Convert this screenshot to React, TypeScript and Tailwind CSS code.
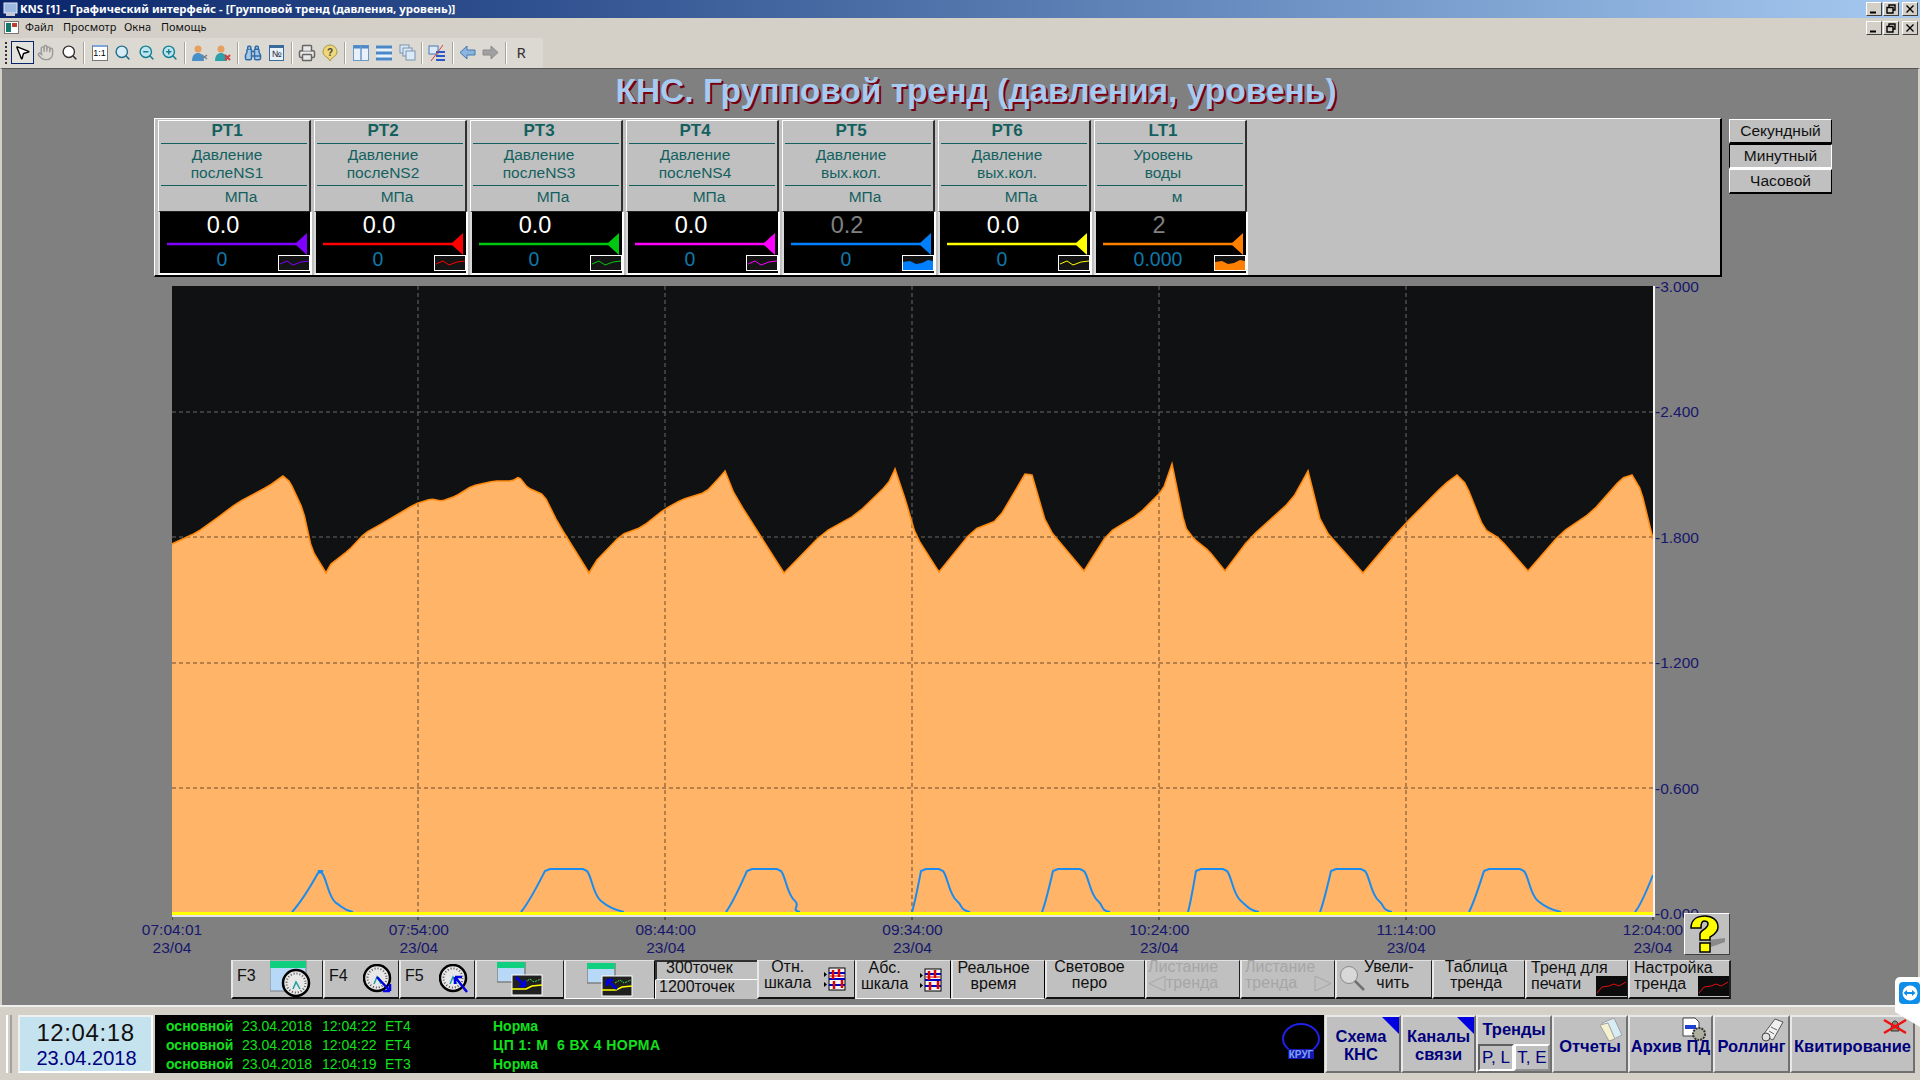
import { ReactNode } from 'react'
import { Binoculars, Hand, MousePointer2, Printer, Search, ZoomIn, ZoomOut } from 'lucide-react'

const SANS = "font-['Liberation_Sans',Arial,sans-serif]"

// top curve of the level trend, real screen coordinates
const LEVEL: [number, number][] = [
  [172, 544], [196, 533], [217, 518], [237, 503], [269, 486], [283, 476], [290, 482], [303, 510], [312, 550], [326, 573],
  [331, 564], [349, 550], [365, 533], [385, 522], [415, 504], [431, 499], [442, 501], [456, 496], [472, 486], [494, 481],
  [512, 481], [519, 477], [528, 488], [544, 495], [558, 523], [589, 573], [597, 560], [621, 535], [642, 527], [665, 509],
  [681, 500], [706, 492], [720, 477], [725, 471], [735, 496], [784, 573], [823, 533], [857, 514], [888, 484], [895, 469],
  [906, 502], [916, 536], [939, 572], [973, 530], [998, 520], [1025, 474], [1032, 475], [1047, 527], [1084, 571], [1108, 533],
  [1139, 514], [1163, 490], [1172, 464], [1185, 527], [1194, 539], [1209, 551], [1225, 571], [1249, 539], [1292, 500], [1308, 471],
  [1322, 527], [1363, 573], [1402, 527], [1445, 484], [1457, 475], [1466, 484], [1484, 529], [1500, 539], [1528, 571], [1561, 533],
  [1592, 512], [1622, 478], [1632, 475], [1641, 490], [1653, 539],
]

// corner-cutting pass so the trace is not so angular; the sharp valleys and peaks stay
const smooth = LEVEL.flatMap((p, i) => {
  const n = LEVEL[i + 1]
  if (!n) return [p]
  const a: [number, number] = [p[0] * 0.85 + n[0] * 0.15, p[1] * 0.85 + n[1] * 0.15]
  const b: [number, number] = [p[0] * 0.15 + n[0] * 0.85, p[1] * 0.15 + n[1] * 0.85]
  if (i === 0 || p[1] >= 560 || p[1] <= 476) return [p, b]
  return [a, b]
})
const levelLine = smooth.map((p) => p.map((v) => v.toFixed(1)).join(',')).join(' ')
const levelArea = `172,913 ${levelLine} 1653,913`

const hump = (a: number, b: number, c: number, d: number, top = 869) =>
  `M${a} 912 C${a + (b - a) * 0.35} 902 ${a + (b - a) * 0.7} ${top + 16} ${b} ${top + 2} L${b + 5} ${top} L${c - 4} ${top} L${c} ${top + 2} C${c + 5} ${top + 8} ${c + 6} ${top + 26} ${c + 14} ${top + 32} C${c + 20} 906 ${d - 10} 910 ${d} 912`

const PUMP_PATH = [
  hump(292, 318, 322, 353, 871),
  hump(521, 545, 587, 624),
  hump(726, 747, 781, 800),
  hump(912, 921, 943, 970),
  hump(1042, 1053, 1084, 1110),
  hump(1188, 1196, 1227, 1259),
  hump(1320, 1331, 1365, 1392),
  hump(1469, 1484, 1524, 1561),
  'M1635 912 C1641 905 1647 890 1653 875',
].join(' ')

const HLINES = [412, 537, 663, 788]
const VLINES = [418, 665, 912, 1159, 1406]
const TIMES = ['07:04:01', '07:54:00', '08:44:00', '09:34:00', '10:24:00', '11:14:00', '12:04:00']
const SCALE = ['-3.000', '-2.400', '-1.800', '-1.200', '-0.600', '-0.000']

const CHANNELS = [
  { tag: 'PT1', l1: 'Давление', l2: 'послеNS1', unit: 'МПа', val: '0.0', low: '0', color: '#8000ff', dim: false, fill: false },
  { tag: 'PT2', l1: 'Давление', l2: 'послеNS2', unit: 'МПа', val: '0.0', low: '0', color: '#ff0000', dim: false, fill: false },
  { tag: 'PT3', l1: 'Давление', l2: 'послеNS3', unit: 'МПа', val: '0.0', low: '0', color: '#00c810', dim: false, fill: false },
  { tag: 'PT4', l1: 'Давление', l2: 'послеNS4', unit: 'МПа', val: '0.0', low: '0', color: '#ff00ff', dim: false, fill: false },
  { tag: 'PT5', l1: 'Давление', l2: 'вых.кол.', unit: 'МПа', val: '0.2', low: '0', color: '#0080ff', dim: true, fill: true },
  { tag: 'PT6', l1: 'Давление', l2: 'вых.кол.', unit: 'МПа', val: '0.0', low: '0', color: '#ffff00', dim: false, fill: false },
  { tag: 'LT1', l1: 'Уровень', l2: 'воды', unit: 'м', val: '2', low: '0.000', color: '#ff8000', dim: true, fill: true },
]

function Channel({ c }: { c: (typeof CHANNELS)[number] }) {
  return (
    <div className="w-[156px] shrink-0 flex flex-col pl-[3px]">
      <div className="h-[91px] border-t border-t-white border-l border-l-white border-r-2 border-r-[#303030] px-[2px] text-[#14605f]">
        <div className="h-[23px] border-b border-[#14605f] text-center pr-[14px] pt-[1px] text-[17px] font-bold leading-[18px]">{c.tag}</div>
        <div className="h-[42px] border-b border-[#14605f] text-center pr-[14px] pt-[2px] text-[15.5px] leading-[18px]">
          <div>{c.l1}</div>
          <div>{c.l2}</div>
        </div>
        <div className="text-center pl-[14px] pt-[2px] text-[15.5px] leading-[18px]">{c.unit}</div>
      </div>
      <div className="h-[64px] w-[154px] bg-black border-l-2 border-l-[#d8d8d8] border-b-2 border-b-white border-r-2 border-r-white border-t border-t-[#202020] flex flex-col">
        <div className={`h-[27px] pr-[24px] text-center text-[23.5px] leading-[27px] ${c.dim ? 'text-[#808080]' : 'text-white'}`}>{c.val}</div>
        <svg width="150" height="22" viewBox="0 0 150 22" className="-mt-[6px] shrink-0">
          <line x1="7" y1="11" x2="138" y2="11" stroke={c.color} strokeWidth="2.5" />
          <polygon points="135,11 147,0 147,22" fill={c.color} />
        </svg>
        <div className="grid grid-cols-[118px_32px] items-start">
          <div className="text-center pl-[6px] -mt-[6px] text-[19.5px] leading-[20px] text-[#0f78aa]">{c.low}</div>
          <svg width="32" height="16" viewBox="0 0 32 16">
            <rect x="0.5" y="0.5" width="31" height="15" fill="#141414" stroke="#fff" />
            {c.fill ? (
              <polygon points="1,7 8,6 14,9 20,8 26,5 31,6 31,15 1,15" fill={c.color} />
            ) : (
              <polyline points="2,9 9,6 15,10 23,7 31,6" fill="none" stroke={c.color} strokeWidth="1" />
            )}
          </svg>
        </div>
      </div>
    </div>
  )
}

function ToolSep() {
  return <div className="w-[2px] h-[22px] mx-[2.5px] bg-[#a8a49c] border-r border-white" />
}

function Tool({ children, active }: { children: ReactNode; active?: boolean }) {
  return (
    <div className={`w-[23.3px] h-[23px] flex items-center justify-center ${active ? 'border border-[#0a246a] bg-[#e4e2dc]' : ''}`}>
      {children}
    </div>
  )
}

function WinBtn({ kind }: { kind: 'min' | 'max' | 'close' }) {
  return (
    <div className="w-[16px] h-[14px] bg-[#d4d0c8] border border-t-white border-l-white border-b-[#404040] border-r-[#404040] flex items-center justify-center">
      <svg width="10" height="10" viewBox="0 0 10 10" fill="none" stroke="#000" strokeWidth="1.4">
        {kind === 'min' && <line x1="1" y1="8.5" x2="7" y2="8.5" strokeWidth="2" />}
        {kind === 'max' && <path d="M3 3V1h6v5H7M1 3.5h6v5.5H1z" />}
        {kind === 'close' && <path d="M1.5 1.5l7 7M8.5 1.5l-7 7" />}
      </svg>
    </div>
  )
}

function Gauge({ x = 0, y = 0, arrow }: { x?: number; y?: number; arrow?: 'in' | 'out' }) {
  return (
    <g transform={`translate(${x} ${y})`}>
      <circle cx="14" cy="14" r="13" fill="#e8e8e8" stroke="#000" strokeWidth="2.5" />
      <circle cx="14" cy="14" r="9.5" fill="none" stroke="#555" strokeWidth="2" strokeDasharray="1 2" />
      <path d="M11 20l3-7 4 7" fill="none" stroke="#20a0a0" strokeWidth="1.5" />
      {arrow === 'in' && <path d="M14 13l13 14M27 27v-7M27 27h-7" stroke="#0000e0" strokeWidth="2.5" fill="none" />}
      {arrow === 'out' && <path d="M28 28L16 13M16 13v7M16 13h7" stroke="#0000e0" strokeWidth="2.5" fill="none" />}
    </g>
  )
}

function TrendWin({ up }: { up?: boolean }) {
  return (
    <svg width="46" height="34" viewBox="0 0 46 34">
      <rect x="0" y="0" width="28" height="20" fill="#b8d8f8" stroke="#808080" strokeWidth="1.5" />
      <rect x="0" y="0" width="28" height="6" fill="#10d080" />
      <rect x="15" y="13" width="30" height="20" fill="#202020" stroke="#fff" strokeWidth="1" />
      <path d="M15 27h14l6-3 10-1" stroke="#ffff00" strokeWidth="1.5" fill="none" />
      <path d="M28 20l5-3 4 3 7-3" stroke="#40e040" strokeWidth="1" fill="none" strokeDasharray="2 1" />
      {up ? (
        <path d="M30 26L20 17M20 17v6M20 17h6" stroke="#0000e0" strokeWidth="2.5" fill="none" />
      ) : (
        <path d="M19 15l9 9M28 24v-6M28 24h-6" stroke="#0000e0" strokeWidth="2.5" fill="none" />
      )}
    </svg>
  )
}

function ScaleIcon() {
  return (
    <svg width="22" height="24" viewBox="0 0 22 24" className="shrink-0">
      <path d="M0 5l3 2.5L0 10zM0 15l3 2.5L0 20z" fill="#000" />
      <rect x="5" y="1" width="16" height="22" fill="#f4f4f4" stroke="#000" />
      <path d="M5 6h16M5 12h16M5 18h16" stroke="#0000c0" strokeWidth="2" />
      <path d="M9 3v9M15 2v8M18 13v8M10 14v8" stroke="#e00000" strokeWidth="2.5" />
      <path d="M6 9h14" stroke="#e00000" />
    </svg>
  )
}

function MiniTrend() {
  return (
    <svg width="31" height="20" viewBox="0 0 31 20" className="shrink-0">
      <rect width="31" height="20" fill="#0c0c0c" />
      <polyline points="1,17 6,11 13,10 18,8 23,10 30,6" fill="none" stroke="#e01010" strokeWidth="1" />
    </svg>
  )
}

function TBtn({ className, children, pressed }: { className: string; children: ReactNode; pressed?: boolean }) {
  return (
    <div
      className={`${className} h-[39px] shrink-0 bg-[#c0c0c0] border-l-2 border-t border-l-[#e8e8e8] border-t-[#e0e0e0] ${
        pressed ? 'border-r border-b border-r-black border-b-white' : 'border-r border-b-2 border-r-[#202020] border-b-[#101010]'
      } text-[16px] leading-[16px] text-[#111]`}
    >
      {children}
    </div>
  )
}

function NavBtn({ className, children }: { className: string; children: ReactNode }) {
  return (
    <div className={`${className} relative h-[58px] shrink-0 bg-[#c0c0c0] border-2 border-t-[#e8e8e8] border-l-[#e8e8e8] border-b-[#707070] border-r-[#707070] text-[#00007c] font-bold text-[16.5px] leading-[18px]`}>
      {children}
    </div>
  )
}

function CornerMark() {
  return (
    <svg width="17" height="17" viewBox="0 0 17 17" className="absolute top-0 right-0">
      <polygon points="0,0 17,0 17,17" fill="#0000e0" />
    </svg>
  )
}

export default function App() {
  return (
    <div className={`${SANS} relative w-[1920px] h-[1080px] overflow-hidden flex flex-col bg-[#d4d0c8]`}>
      {/* window title */}
      <div className="h-[18px] shrink-0 bg-linear-to-r from-[#0a246a] to-[#a6caf0] flex items-center pl-[3px] pr-[2px]">
        <svg width="15" height="15" viewBox="0 0 15 15" className="shrink-0">
          <rect x="1" y="1" width="13" height="10" fill="#9ab8e0" stroke="#e8e8f0" />
          <rect x="3" y="11" width="9" height="3" fill="#c8c8d8" />
        </svg>
        <span className="ml-[2px] font-['Noto_Sans',sans-serif] text-[11.4px] font-bold text-white whitespace-nowrap">
          KNS [1] - Графический интерфейс - [Групповой тренд (давления, уровень)]
        </span>
        <div className="ml-auto flex gap-[1px]">
          <WinBtn kind="min" />
          <WinBtn kind="max" />
          <div className="ml-[2px]"><WinBtn kind="close" /></div>
        </div>
      </div>

      {/* menu */}
      <div className="h-[19px] shrink-0 flex items-center pl-[4px] pr-[2px] font-['Noto_Sans',sans-serif] text-[11px] text-[#111]">
        <svg width="15" height="15" viewBox="0 0 15 15" className="shrink-0">
          <rect x="0.5" y="1.5" width="14" height="12" fill="#fff" stroke="#777" />
          <rect x="2" y="3" width="5" height="9" fill="#157a6a" />
          <rect x="8" y="3" width="5" height="4" fill="#c04030" />
        </svg>
        <span className="ml-[6px] w-[38px]">Файл</span>
        <span className="w-[61px]">Просмотр</span>
        <span className="w-[37px]">Окна</span>
        <span>Помощь</span>
        <div className="ml-auto flex gap-[1px]">
          <WinBtn kind="min" />
          <WinBtn kind="max" />
          <div className="ml-[2px]"><WinBtn kind="close" /></div>
        </div>
      </div>

      {/* toolbar */}
      <div className="h-[31px] shrink-0 flex items-center">
        <div className="h-[30px] w-[543px] bg-[#dcd9d2] flex items-center pl-[5px]">
          <div className="w-[4px] h-[22px] mr-[2px] border-l-2 border-dotted border-[#333]" />
          <Tool active><MousePointer2 size={17} fill="#fff" color="#000" /></Tool>
          <Tool><Hand size={17} color="#9a9a9a" /></Tool>
          <Tool><Search size={17} color="#333" fill="#fff" /></Tool>
          <ToolSep />
          <Tool>
            <div className="w-[16px] h-[16px] bg-white border border-[#777] border-t-2 border-t-[#7ea6d8] text-[9px] leading-[12px] text-center text-black">1:1</div>
          </Tool>
          <Tool><Search size={17} color="#1f6f8a" fill="#d8ecf8" /></Tool>
          <Tool><ZoomOut size={17} color="#0f7f90" fill="#bfe4f0" /></Tool>
          <Tool><ZoomIn size={17} color="#0f7f90" fill="#bfe4f0" /></Tool>
          <ToolSep />
          <Tool>
            <svg width="18" height="18" viewBox="0 0 18 18">
              <circle cx="7" cy="5" r="3.5" fill="#e8a060" />
              <path d="M1 17c0-6 3-8 6-8s6 2 6 8z" fill="#4a90c8" />
              <path d="M11 11l5 4M16 11l-5 4" stroke="#708090" strokeWidth="1.5" />
            </svg>
          </Tool>
          <Tool>
            <svg width="18" height="18" viewBox="0 0 18 18">
              <circle cx="7" cy="5" r="3.5" fill="#e8a060" />
              <path d="M1 17c0-6 3-8 6-8s6 2 6 8z" fill="#30a0a8" />
              <path d="M11 11l5 5M16 11l-5 5" stroke="#d04040" strokeWidth="2" />
            </svg>
          </Tool>
          <ToolSep />
          <Tool><Binoculars size={18} color="#2f6ca8" fill="#a8c8e8" /></Tool>
          <Tool>
            <div className="w-[15px] h-[16px] bg-[#e8f0f8] border border-[#3a6a9a] border-t-[3px] text-[9px] leading-[12px] text-center text-[#223]">№</div>
          </Tool>
          <ToolSep />
          <Tool><Printer size={18} color="#666" fill="#e8e8e8" /></Tool>
          <Tool>
            <svg width="18" height="18" viewBox="0 0 18 18">
              <path d="M9 1a7 7 0 0 1 7 7c0 3-3 5-5 6l-2 3-2-3c-2-1-5-3-5-6a7 7 0 0 1 7-7z" fill="#f0d878" stroke="#a89848" />
              <text x="9" y="12" textAnchor="middle" fontSize="10" fontWeight="bold" fill="#444">?</text>
            </svg>
          </Tool>
          <ToolSep />
          <Tool>
            <svg width="16" height="16" viewBox="0 0 16 16">
              <rect x="0.5" y="0.5" width="15" height="15" fill="#e8f0fa" stroke="#6a98c8" />
              <rect x="0.5" y="0.5" width="15" height="3" fill="#4a88c8" />
              <line x1="8" y1="1" x2="8" y2="15" stroke="#6a98c8" strokeWidth="1.5" />
            </svg>
          </Tool>
          <Tool>
            <svg width="16" height="16" viewBox="0 0 16 16">
              <rect x="0.5" y="0.5" width="15" height="15" fill="#e8f0fa" />
              <path d="M0 2h16M0 8h16M0 14h16" stroke="#4a88c8" strokeWidth="3" />
            </svg>
          </Tool>
          <Tool>
            <svg width="17" height="17" viewBox="0 0 17 17" fill="#dceaf8" stroke="#7a94b0">
              <rect x="1" y="1" width="9" height="8" />
              <rect x="4" y="4" width="9" height="8" />
              <rect x="7" y="7" width="9" height="9" />
            </svg>
          </Tool>
          <ToolSep />
          <Tool>
            <svg width="18" height="18" viewBox="0 0 18 18">
              <rect x="1" y="2" width="9" height="8" fill="#dceaf8" stroke="#4a78b8" />
              <path d="M8 8h9M8 12h9M8 16h9" stroke="#2a58c8" strokeWidth="2" />
              <path d="M3 17L15 1" stroke="#d04040" />
            </svg>
          </Tool>
          <ToolSep />
          <Tool>
            <svg width="17" height="15" viewBox="0 0 17 15">
              <path d="M1 7.5L8 1v4h8v5H8v4z" fill="#8ab4e0" stroke="#4878b0" />
            </svg>
          </Tool>
          <Tool>
            <svg width="17" height="15" viewBox="0 0 17 15">
              <path d="M16 7.5L9 1v4H1v5h8v4z" fill="#a0a0a0" stroke="#8a8a8a" />
            </svg>
          </Tool>
          <ToolSep />
          <div className="w-[23px] text-center font-['Noto_Sans',sans-serif] text-[15px] text-[#333]">R</div>
        </div>
      </div>

      {/* main gray area */}
      <div className="relative h-[937px] shrink-0 bg-[#808080] border-l-2 border-r-2 border-l-[#d4d0c8] border-r-[#d4d0c8] border-t border-t-[#555]">
        <div className="mt-[8px] h-[28px] pl-[32px] text-center text-[33.5px] font-bold leading-[28px] text-[#a6caf0] [text-shadow:2px_2px_0_#7a0010] whitespace-nowrap">
          КНС. Групповой тренд (давления, уровень)
        </div>

        <div className="mt-[13px] flex items-start pl-[152px]">
          <div className="w-[1568px] h-[159px] bg-[#c0c0c0] border-t border-l border-t-white border-l-white border-r-2 border-b-2 border-r-black border-b-black pt-px flex">
            {CHANNELS.map((c) => (
              <Channel key={c.tag} c={c} />
            ))}
          </div>
          <div className="ml-[7px] mt-[1px] flex flex-col text-[15.5px] text-[#111] text-center leading-[22px]">
            <div className="w-[103px] h-[25px] bg-[#c0c0c0] border border-t-white border-l-white border-b-2 border-b-black border-r-black">Секундный</div>
            <div className="w-[103px] h-[25px] bg-[#c0c0c0] border border-t-black border-l-black border-b-2 border-b-white border-r-white">Минутный</div>
            <div className="w-[103px] h-[25px] bg-[#c0c0c0] border border-t-white border-l-white border-b-2 border-b-black border-r-black">Часовой</div>
          </div>
        </div>

        {/* trend */}
        <div className="mt-[9px] flex items-start pl-[170px]">
          <svg width="1483" height="634" viewBox="172 286 1483 634" className="block shrink-0">
            <defs>
              <clipPath id="under-level">
                <polygon points={levelArea} />
              </clipPath>
            </defs>
            <rect x="172" y="286" width="1481" height="627" fill="#101112" />
            {HLINES.map((y) => (
              <line key={y} x1="172" x2="1653" y1={y} y2={y} stroke="#6a6a6a" strokeDasharray="4 3" />
            ))}
            {VLINES.map((x) => (
              <line key={x} x1={x} x2={x} y1="286" y2="913" stroke="#6a6a6a" strokeDasharray="4 3" />
            ))}
            <polygon points={levelArea} fill="#ffb468" />
            <g clipPath="url(#under-level)">
              {HLINES.map((y) => (
                <line key={y} x1="172" x2="1653" y1={y} y2={y} stroke="#6b4a2c" strokeDasharray="4 3" />
              ))}
              {VLINES.map((x) => (
                <line key={x} x1={x} x2={x} y1="286" y2="913" stroke="#6b4a2c" strokeDasharray="4 3" />
              ))}
            </g>
            <polyline points={levelLine} fill="none" stroke="#ff8a10" strokeWidth="1.6" />
            <path d={PUMP_PATH} fill="none" stroke="#1a8cf0" strokeWidth="2" />
            <rect x="172" y="912" width="1481" height="3" fill="#ffff00" />
            <rect x="172" y="915" width="1483" height="2" fill="#e8e4ec" />
            <rect x="1653" y="286" width="2" height="631" fill="#f4f4f4" />
            {[172, ...VLINES, 1653].map((x) => (
              <line key={x} x1={x} x2={x} y1="917" y2="920" stroke="#222" />
            ))}
          </svg>
          <div className="w-[60px] h-[645px] -mt-[8px] flex flex-col justify-between text-[15.5px] leading-[18px] text-[#17176c]">
            {SCALE.map((s) => (
              <div key={s}>{s}</div>
            ))}
          </div>
        </div>

        <div className="h-[37px] -mt-[2px] mb-[2px] w-[1561px] ml-[130px] flex justify-between text-[15.5px] leading-[18px] text-[#17176c]">
          {TIMES.map((t) => (
            <div key={t} className="w-[80px] text-center">
              <div>{t}</div>
              <div>23/04</div>
            </div>
          ))}
        </div>

        {/* help button sits over the 0.000 label */}
        <div className="absolute left-[1682px] top-[844px] w-[46px] h-[42px] bg-[#c0c0c0] border border-t-white border-l-white border-b-[#404040] border-r-[#404040]">
          <svg width="44" height="40" viewBox="0 0 44 40">
            <path d="M24 26l16-2v4l-14 5z" fill="#8a8a8a" />
            <path d="M6 14C6 5 13 2 20 2s13 4 13 11c0 6-5 8-8 10v3H15v-6c0-4 8-5 8-10 0-2-2-3-4-3s-3 2-3 7zM15 29h10v9H15z" fill="#ffff00" stroke="#000" strokeWidth="1.5" />
          </svg>
        </div>

        {/* trend commands */}
        <div className="ml-[229px] flex items-start">
          <TBtn className="w-[92px] flex items-center justify-between pl-[4px] pr-[8px]">
            <span className="pb-[6px]">F3</span>
            <svg width="44" height="38" viewBox="0 0 44 38">
              <rect x="0" y="1" width="36" height="30" fill="#b8d8f8" stroke="#808080" />
              <rect x="0" y="1" width="36" height="7" fill="#10d080" />
              <Gauge x="12" y="9" />
            </svg>
          </TBtn>
          <TBtn className="w-[76px] flex items-center justify-between pl-[4px] pr-[5px]">
            <span className="pb-[6px]">F4</span>
            <svg width="30" height="30" viewBox="0 0 30 30"><Gauge arrow="in" /></svg>
          </TBtn>
          <TBtn className="w-[76px] flex items-center justify-between pl-[4px] pr-[5px]">
            <span className="pb-[6px]">F5</span>
            <svg width="30" height="30" viewBox="0 0 30 30"><Gauge arrow="out" /></svg>
          </TBtn>
          <TBtn className="w-[89px] flex items-center justify-center"><TrendWin /></TBtn>
          <TBtn className="w-[91px] flex items-center justify-center" pressed><TrendWin up /></TBtn>
          <div className="w-[102px] h-[39px] shrink-0 flex flex-col text-[16px] text-[#111]">
            <div className="h-[20px] bg-[#c0c0c0] border-t-2 border-l-2 border-t-[#303030] border-l-[#303030] border-b border-b-white pl-[9px] leading-[12px]">300точек</div>
            <div className="h-[19px] bg-[#c0c0c0] border-l border-l-white pl-[3px] leading-[14px]">1200точек</div>
          </div>
          <TBtn className="w-[98px] flex items-center justify-between pl-[5px] pr-[8px]">
            <div className="text-center pb-[8px]"><div>Отн.</div><div>шкала</div></div>
            <ScaleIcon />
          </TBtn>
          <TBtn className="w-[96px] flex items-center justify-between pl-[4px] pr-[8px]" pressed>
            <div className="text-center pb-[8px]"><div>Абс.</div><div>шкала</div></div>
            <ScaleIcon />
          </TBtn>
          <TBtn className="w-[94px] flex items-center justify-center pr-[10px] pb-[8px]" pressed>
            <div className="text-center"><div>Реальное</div><div>время</div></div>
          </TBtn>
          <TBtn className="w-[100px] flex items-center justify-center pr-[12px] pb-[8px]">
            <div className="text-center"><div>Световое</div><div>перо</div></div>
          </TBtn>
          <TBtn className="w-[95px] flex flex-col justify-center pl-[1px] pb-[8px]">
            <div className="text-[#a6a6a6]">Листание</div>
            <div className="flex items-center text-[#a6a6a6] h-[16px]">
              <svg width="18" height="17" viewBox="0 0 18 17"><path d="M17 1L1 8.5 17 16z" fill="none" stroke="#a6a6a6" /></svg>
              <span>тренда</span>
            </div>
          </TBtn>
          <TBtn className="w-[95px] flex flex-col justify-center pl-[3px] pb-[8px]">
            <div className="text-[#a6a6a6]">Листание</div>
            <div className="flex items-center justify-between pr-[2px] text-[#a6a6a6] h-[16px]">
              <span>тренда</span>
              <svg width="18" height="17" viewBox="0 0 18 17"><path d="M1 1l16 7.5L1 16z" fill="none" stroke="#a6a6a6" /></svg>
            </div>
          </TBtn>
          <TBtn className="w-[97px] flex items-center pl-[2px] pb-[2px]">
            <svg width="27" height="27" viewBox="0 0 27 27" className="shrink-0">
              <circle cx="10" cy="10" r="8.5" fill="#d8d8d8" stroke="#8a8a8a" />
              <line x1="16" y1="16" x2="25" y2="25" stroke="#707070" strokeWidth="2.5" />
            </svg>
            <div className="text-center -ml-[2px] pb-[6px]"><div>Увели-</div><div className="pl-[8px]">чить</div></div>
          </TBtn>
          <TBtn className="w-[93px] flex items-center justify-center pr-[6px] pb-[8px]">
            <div className="text-center"><div>Таблица</div><div>тренда</div></div>
          </TBtn>
          <TBtn className="w-[103px] relative pl-[4px]">
            <div className="-mt-[1px]">Тренд для</div>
            <div>печати</div>
            <div className="absolute right-0 bottom-[1px]"><MiniTrend /></div>
          </TBtn>
          <TBtn className="w-[103px] relative pl-[4px] border-r-2">
            <div className="-mt-[1px]">Настройка</div>
            <div>тренда</div>
            <div className="absolute right-0 bottom-[1px]"><MiniTrend /></div>
          </TBtn>
        </div>
      </div>

      {/* status bar */}
      <div className="h-[75px] shrink-0 border-t-2 border-t-[#eeeeee] pt-[8px] flex items-start pl-[6px]">
        <div className="w-[6px] h-[58px] border-l-2 border-r-2 border-l-white border-r-[#a0a0a0] mr-[6px]" />
        <div className="w-[135px] h-[58px] shrink-0 bg-[#c5e3ee] border-2 border-t-[#f0f0f0] border-l-[#f0f0f0] border-b-white border-r-white text-center">
          <div className="text-[24px] leading-[28px] tracking-[0.6px] text-[#111] mt-[2px]">12:04:18</div>
          <div className="text-[20px] leading-[22px] text-[#000080] pl-[2px]">23.04.2018</div>
        </div>
        <div className="w-[1169px] h-[58px] shrink-0 bg-black ml-[2px] pl-[11px] pt-[2px] relative">
          <div className="grid grid-cols-[76px_80px_63px_108px_1fr] text-[14px] leading-[19px] font-bold text-[#12e01c] whitespace-pre">
            <span>основной</span><span className="font-normal">23.04.2018</span><span className="font-normal">12:04:22</span><span className="font-normal">ET4</span><span>Норма</span>
            <span>основной</span><span className="font-normal">23.04.2018</span><span className="font-normal">12:04:22</span><span className="font-normal">ET4</span><span className="tracking-[0.45px]">ЦП 1: М  6 ВХ 4 НОРМА</span>
            <span>основной</span><span className="font-normal">23.04.2018</span><span className="font-normal">12:04:19</span><span className="font-normal">ET3</span><span>Норма</span>
          </div>
          <svg width="38" height="36" viewBox="0 0 38 36" className="absolute right-[4px] top-[8px]">
            <path d="M9 28C3 24 1 20 1 16 1 8 9 1 19 1s18 7 18 15c0 4-2 8-8 12" fill="none" stroke="#2020e8" strokeWidth="2" />
            <rect x="6" y="26" width="26" height="10" fill="#1515b0" />
            <text x="19" y="34.5" textAnchor="middle" fontSize="10" fontWeight="bold" fill="#7aa4f0">КРУГ</text>
          </svg>
        </div>
        <div className="flex ml-px">
          <NavBtn className="w-[76px] flex items-center justify-center text-center pr-[4px]">
            <CornerMark />
            <div className="pt-[2px]"><div>Схема</div><div>КНС</div></div>
          </NavBtn>
          <NavBtn className="w-[75px] flex items-center justify-center text-center">
            <CornerMark />
            <div className="pt-[2px]"><div>Каналы</div><div>связи</div></div>
          </NavBtn>
          <NavBtn className="w-[76px] flex flex-col">
            <div className="h-[28px] text-center pt-[3px]">Тренды</div>
            <div className="flex font-normal text-[17px]">
              <div className="w-[36px] h-[27px] border-2 border-t-[#606060] border-l-[#606060] border-b-white border-r-white text-center leading-[24px] whitespace-nowrap">P, L</div>
              <div className="w-[36px] h-[27px] border-2 border-t-white border-l-white border-b-[#909090] border-r-[#909090] text-center leading-[24px] whitespace-nowrap">T, E</div>
            </div>
          </NavBtn>
          <NavBtn className="w-[76px] flex items-center justify-center">
            <svg width="24" height="26" viewBox="0 0 24 26" className="absolute right-[3px] top-0">
              <path d="M3 6l12-5 8 17-12 6z" fill="#d8ecf4" stroke="#a0a0a0" />
              <path d="M1 8l8-2 7 16-6 2z" fill="#f4f0d0" stroke="#a0a0a0" />
            </svg>
            <span className="pt-[3px]">Отчеты</span>
          </NavBtn>
          <NavBtn className="w-[85px] flex items-center justify-center whitespace-nowrap">
            <svg width="26" height="26" viewBox="0 0 26 26" className="absolute right-[4px] top-0">
              <path d="M2 1h12l4 4v14H2z" fill="#fff" stroke="#444" />
              <rect x="4" y="8" width="11" height="4" fill="#2040d0" />
              <circle cx="18" cy="17" r="6" fill="#b0b0a0" stroke="#333" strokeWidth="2" strokeDasharray="2 1" />
            </svg>
            <span className="pt-[3px]">Архив ПД</span>
          </NavBtn>
          <NavBtn className="w-[77px] flex items-center justify-center">
            <svg width="26" height="26" viewBox="0 0 26 26" className="absolute right-[2px] top-0">
              <path d="M3 18L15 2l8 3-10 18z" fill="#f0f0f0" stroke="#555" />
              <circle cx="6" cy="20" r="4" fill="#e0e0e0" stroke="#444" />
              <path d="M11 10l6 3M9 14l5 3" stroke="#666" />
            </svg>
            <span className="pt-[3px]">Роллинг</span>
          </NavBtn>
          <NavBtn className="w-[125px] flex items-center justify-center">
            <svg width="26" height="20" viewBox="0 0 26 20" className="absolute right-[5px] top-0">
              <path d="M9 14c0-5 1-10 4-10s4 5 4 10z" fill="#8a8a70" stroke="#333" />
              <path d="M2 3l22 13M24 3L2 16" stroke="#f01010" strokeWidth="2.5" />
            </svg>
            <span className="pt-[3px]">Квитирование</span>
          </NavBtn>
        </div>
      </div>

      {/* remote-desktop tab over the right edge */}
      <div className="absolute right-0 top-[977px] w-[25px] h-[50px] bg-white rounded-tl-[5px] [clip-path:polygon(0_0,100%_0,100%_100%,0_70%)] flex justify-end pt-[5px]">
        <svg width="21" height="22" viewBox="0 0 21 22">
          <rect x="0" y="0" width="21" height="22" rx="4" fill="#0e8ee9" />
          <circle cx="11" cy="11" r="7.5" fill="#fff" />
          <path d="M4.5 11l3.5-3v2h5V8l3.5 3-3.5 3v-2H8v2z" fill="#0e8ee9" />
        </svg>
      </div>
    </div>
  )
}
